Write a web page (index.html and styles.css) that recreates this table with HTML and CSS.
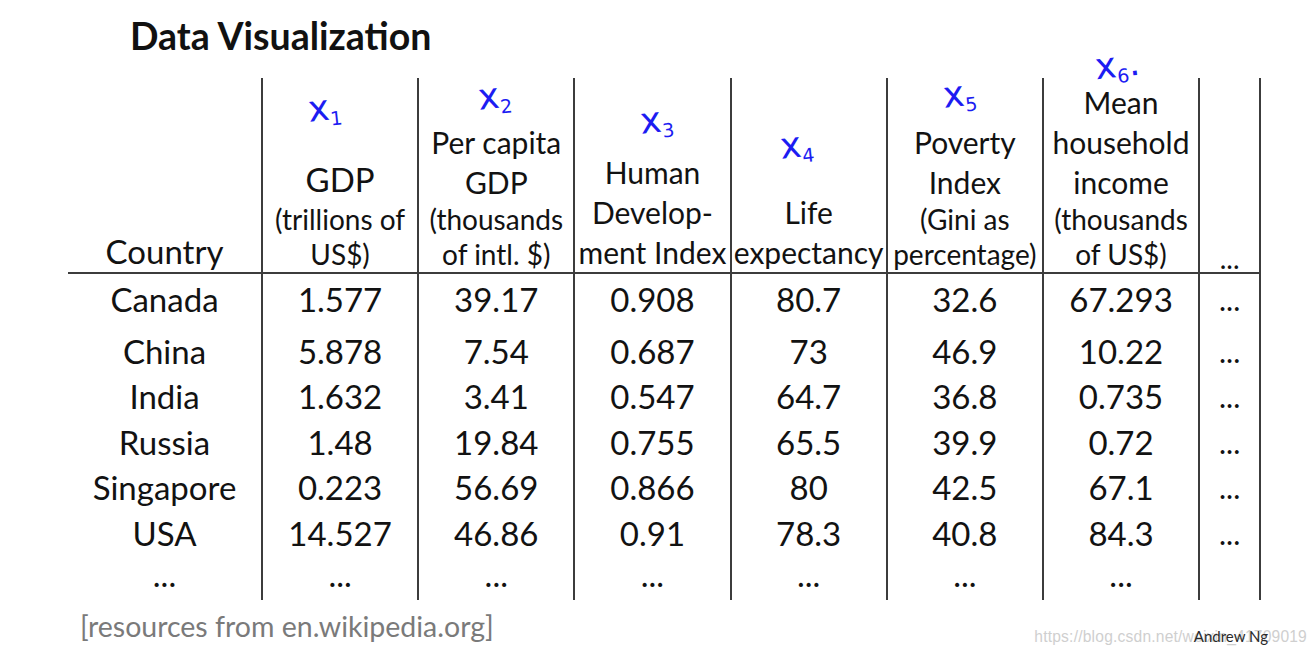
FILE: index.html
```html
<!DOCTYPE html>
<html lang="en">
<head>
<meta charset="utf-8">
<title>Data Visualization</title>
<link rel="stylesheet" href="styles.css">
</head>
<body>
<main class="slide">
  <h1 class="title">Data Visualization</h1>
  <div class="table-wrap">
    <table class="data">
      <colgroup>
        <col class="c-country">
        <col class="c-num"><col class="c-num"><col class="c-num">
        <col class="c-num"><col class="c-num"><col class="c-num">
        <col class="c-more">
      </colgroup>
      <thead>
        <tr>
          <th class="first"><span class="big country">Country</span></th>
          <th><span class="gdp">GDP</span><span class="small">(trillions of</span><span class="small">US$)</span></th>
          <th><span class="big">Per capita</span><span class="big">GDP</span><span class="small">(thousands</span><span class="small">of intl. $)</span></th>
          <th><span class="big">Human</span><span class="big">Develop-</span><span class="big">ment Index</span></th>
          <th><span class="big">Life</span><span class="big">expectancy</span></th>
          <th><span class="big">Poverty</span><span class="big">Index</span><span class="small">(Gini as</span><span class="small">percentage)</span></th>
          <th><span class="big">Mean</span><span class="big">household</span><span class="big">income</span><span class="small">(thousands</span><span class="small">of US$)</span></th>
          <th class="last"><span class="small dots-head">...</span></th>
        </tr>
      </thead>
      <tbody>
        <tr class="r-first"><td class="first">Canada</td><td>1.577</td><td>39.17</td><td>0.908</td><td>80.7</td><td>32.6</td><td>67.293</td><td class="last">...</td></tr>
        <tr><td class="first">China</td><td>5.878</td><td>7.54</td><td>0.687</td><td>73</td><td>46.9</td><td>10.22</td><td class="last">...</td></tr>
        <tr><td class="first">India</td><td>1.632</td><td>3.41</td><td>0.547</td><td>64.7</td><td>36.8</td><td>0.735</td><td class="last">...</td></tr>
        <tr><td class="first">Russia</td><td>1.48</td><td>19.84</td><td>0.755</td><td>65.5</td><td>39.9</td><td>0.72</td><td class="last">...</td></tr>
        <tr><td class="first">Singapore</td><td>0.223</td><td>56.69</td><td>0.866</td><td>80</td><td>42.5</td><td>67.1</td><td class="last">...</td></tr>
        <tr><td class="first">USA</td><td>14.527</td><td>46.86</td><td>0.91</td><td>78.3</td><td>40.8</td><td>84.3</td><td class="last">...</td></tr>
        <tr class="r-last"><td class="first">...</td><td>...</td><td>...</td><td>...</td><td>...</td><td>...</td><td>...</td><td class="last"></td></tr>
      </tbody>
    </table>
    <span class="ink ink1">x<sub>1</sub></span>
    <span class="ink ink2">x<sub>2</sub></span>
    <span class="ink ink3">x<sub>3</sub></span>
    <span class="ink ink4">x<sub>4</sub></span>
    <span class="ink ink5">x<sub>5</sub></span>
    <span class="ink ink6">x<sub>6</sub>.</span>
  </div>
  <footer class="foot">
    <span class="source">[resources from en.wikipedia.org]</span>
    <span class="credit">
      <span class="watermark">https://blog.csdn.net/weixin_41709019</span>
      <span class="author">Andrew Ng</span>
    </span>
  </footer>
</main>
</body>
</html>
```

FILE: styles.css
```css
html, body {
  margin: 0;
  padding: 0;
  background: #ffffff;
}

body {
  width: 1316px;
  height: 654px;
  overflow: hidden;
  font-family: Lato, "Open Sans", "Liberation Sans", sans-serif;
  color: #121212;
}

.slide {
  padding: 0 0 0 68px;
}

.title {
  margin: 0 0 0 62px;
  padding-top: 13px;
  height: 78px;
  box-sizing: border-box;
  font-size: 37.5px;
  line-height: 46px;
  font-weight: 700;
  color: #111;
}

.table-wrap {
  position: relative;
  width: 1193px;
}

.data {
  border-collapse: collapse;
  table-layout: fixed;
  width: 1193px;
}

.c-country { width: 194px; }
.c-num { width: 156.2px; }
.c-more { width: 61px; }

.data th,
.data td {
  border-left: 2px solid #3c3c3c;
  padding: 0;
  text-align: center;
  white-space: nowrap;
}

.data th.first,
.data td.first {
  border-left: none;
}

.data th.last,
.data td.last {
  border-right: 2px solid #3c3c3c;
}

.data thead tr {
  height: 195px;
}

.data th {
  vertical-align: bottom;
  font-weight: 400;
  border-bottom: 2px solid #3c3c3c;
  padding-bottom: 0;
}

.data th span {
  display: block;
}

.big {
  font-size: 30px;
  line-height: 40px;
}

.country {
  font-size: 33px;
  line-height: 42px;
}

.gdp {
  font-size: 33px;
  line-height: 46px;
}

.small {
  font-size: 28px;
  line-height: 35px;
}

.dots-head {
  font-size: 28px;
  line-height: 28px;
}

.data td {
  font-size: 33px;
  height: 45.5px;
  line-height: 36px;
  vertical-align: middle;
}

.data tr.r-first td {
  height: 50px;
  padding-bottom: 4px;
}

.data td.last {
  font-size: 30px;
}

.data tr.r-last td {
  height: 44px;
  vertical-align: top;
  padding-top: 0;
}

.ink {
  position: absolute;
  color: #1c1cf2;
  font-family: "DejaVu Sans", sans-serif;
  font-weight: 400;
  font-size: 36px;
  line-height: 1;
  transform: rotate(-6deg);
}

.ink sub {
  font-size: 19px;
  vertical-align: -6px;
}

.ink1 { left: 240px; top: 12px; }
.ink2 { left: 410px; top: 0px; }
.ink3 { left: 572px; top: 24px; }
.ink4 { left: 712px; top: 49px; }
.ink5 { left: 875px; top: -2px; }
.ink6 { left: 1027px; top: -31px; }

.foot {
  display: flex;
  justify-content: space-between;
  align-items: center;
  height: 57px;
  padding: 0 0 0 12px;
}

.source {
  font-size: 28.5px;
  color: #7a7a7a;
  margin-top: -4px;
}

.credit {
  position: relative;
  display: flex;
  align-items: center;
  margin-right: 9px;
  margin-top: 18px;
}

.watermark {
  font-family: "Liberation Sans", Arial, sans-serif;
  font-size: 15.6px;
  color: #cfcfcf;
  letter-spacing: 0.2px;
}

.author {
  position: absolute;
  right: 39px;
  top: -1px;
  font-size: 15px;
  color: #2a2a2a;
}
```
